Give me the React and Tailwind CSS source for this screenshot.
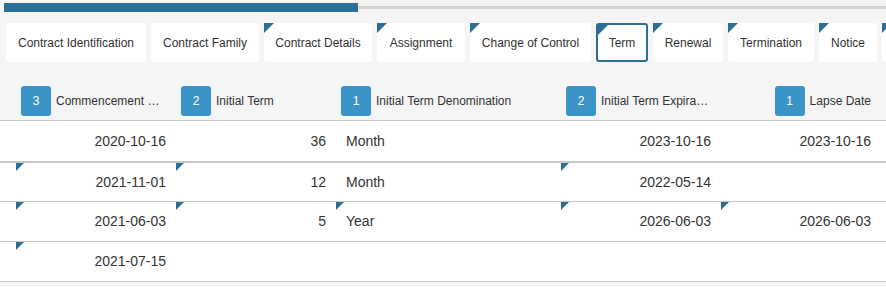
import React from "react";

const tabs = [
  { label: "Contract Identification", w: 140, mark: false },
  { label: "Contract Family", w: 108, mark: false },
  { label: "Contract Details", w: 108, mark: true },
  { label: "Assignment", w: 88, mark: true },
  { label: "Change of Control", w: 121, mark: true },
  { label: "Term", w: 52, mark: true, active: true },
  { label: "Renewal", w: 70, mark: true },
  { label: "Termination", w: 86, mark: true },
  { label: "Notice", w: 58, mark: true },
  { label: "Payment", w: 90, mark: true },
];

const cols = [
  { w: "w-[160px]", align: "right", badge: 3, label: "Commencement Date" },
  { w: "w-[160px]", align: "right", badge: 2, label: "Initial Term" },
  { w: "w-[225px]", align: "left", badge: 1, label: "Initial Term Denomination" },
  { w: "w-[160px]", align: "right", badge: 2, label: "Initial Term Expiration Date" },
  { w: "w-[160px]", align: "right", badge: 1, label: "Lapse Date", end: true },
];

const rows = [
  { h: "h-[42px] border-b-2", v: ["2020-10-16", "36", "Month", "2023-10-16", "2023-10-16"], m: [0, 0, 0, 0, 0] },
  { h: "h-[39px] border-b", v: ["2021-11-01", "12", "Month", "2022-05-14", ""], m: [1, 1, 0, 1, 0] },
  { h: "h-[40px] border-b", v: ["2021-06-03", "5", "Year", "2026-06-03", "2026-06-03"], m: [1, 1, 1, 1, 1] },
  { h: "h-[40px] border-b", v: ["2021-07-15", "", "", "", ""], m: [1, 0, 0, 0, 0] },
];

function Corner({ size }) {
  return (
    <span
      className={
        size === 10
          ? "absolute left-0 top-0 w-0 h-0 border-t-[10px] border-r-[10px] border-t-[#2b6f94] border-r-transparent"
          : "absolute left-0 top-0 w-0 h-0 border-t-[8px] border-r-[8px] border-t-[#2b6f94] border-r-transparent"
      }
    />
  );
}

export default function App() {
  return (
    <div className="w-[886px] h-[287px] overflow-hidden bg-[#f5f5f5] font-['Liberation_Sans',Arial,sans-serif] text-[#333]">
      {/* progress */}
      <div className="flex items-center pt-[3px] pl-[4px]">
        <div className="w-[354px] h-[9px] bg-[#2b7096] shrink-0" />
        <div className="flex-1 h-[3px] bg-[#d4d4d4]" />
      </div>

      {/* tabs */}
      <div className="flex gap-[5px] mt-[11px] pl-[6px]">
        {tabs.map((t) => (
          <div
            key={t.label}
            style={{ width: t.w }}
            className={
              "relative shrink-0 h-[39px] flex items-center justify-center bg-white rounded-[3px] text-[12px] whitespace-nowrap " +
              (t.active ? "border-2 border-[#2b6f94]" : "")
            }
          >
            {t.mark && <Corner size={10} />}
            {t.label}
          </div>
        ))}
      </div>

      {/* header */}
      <div className="flex pl-[16px] pt-[24px] pb-[4px] border-b border-[#c8c8c0]">
        {cols.map((c) => (
          <div
            key={c.label}
            className={
              c.w +
              " shrink-0 flex items-center pl-[5px] pr-[10px] min-w-0 " +
              (c.end ? "justify-end" : "")
            }
          >
            <div className="w-[30px] h-[30px] shrink-0 rounded-[3px] bg-[#3a94c8] text-white text-[12px] flex items-center justify-center">
              {c.badge}
            </div>
            <div className="ml-[5px] text-[12px] whitespace-nowrap overflow-hidden text-ellipsis min-w-0">
              {c.label}
            </div>
          </div>
        ))}
      </div>

      {/* rows */}
      <div className="bg-white">
        {rows.map((r, i) => (
          <div key={i} className={"flex pl-[16px] border-[#c8c8c0] " + r.h}>
            {cols.map((c, j) => (
              <div
                key={j}
                className={
                  c.w +
                  " relative shrink-0 flex items-center px-[10px] text-[14px] " +
                  (c.align === "right" ? "justify-end" : "justify-start")
                }
              >
                {r.m[j] ? <Corner size={8} /> : null}
                {r.v[j]}
              </div>
            ))}
          </div>
        ))}
      </div>
    </div>
  );
}
